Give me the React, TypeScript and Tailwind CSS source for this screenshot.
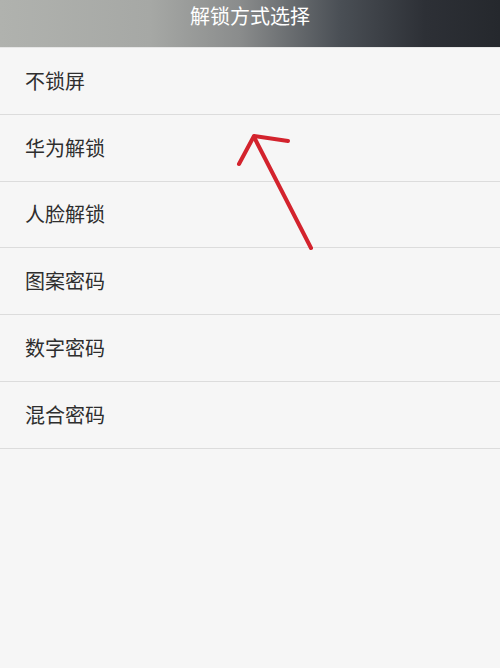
import React from 'react';

const items = ['不锁屏', '华为解锁', '人脸解锁', '图案密码', '数字密码', '混合密码'];

export default function App() {
  return (
    <div
      className="relative w-[500px] h-[668px] bg-[#f6f6f6] overflow-hidden"
      style={{ fontFamily: '"Noto Sans CJK SC", "Noto Sans", sans-serif' }}
    >
      <div className="h-[48px] bg-[linear-gradient(90deg,#b0b2ae_0%,#a6a8a5_30%,#8a8c8c_48%,#4a4f55_68%,#2d3036_85%,#25282d_100%)] flex justify-center border-b border-[#e6e6e6]">
        <span className="text-white text-[20px] leading-[32px]">解锁方式选择</span>
      </div>
      <ul>
        {items.map((item) => (
          <li
            key={item}
            className="h-[66.8px] flex items-center pl-[25px] border-b border-[#dcdcdc] text-[20px] text-[#2e2e2e]"
          >
            {item}
          </li>
        ))}
      </ul>

      {/* red hand-drawn arrow */}
      <svg className="absolute left-0 top-0 pointer-events-none" width="500" height="668">
        <g stroke="#d3232d" strokeWidth="4" strokeLinecap="round" fill="none">
          <path d="M311 248 L254 137" />
          <path d="M239 164 L254 136 L288 141" strokeLinejoin="round" />
        </g>
      </svg>
    </div>
  );
}
